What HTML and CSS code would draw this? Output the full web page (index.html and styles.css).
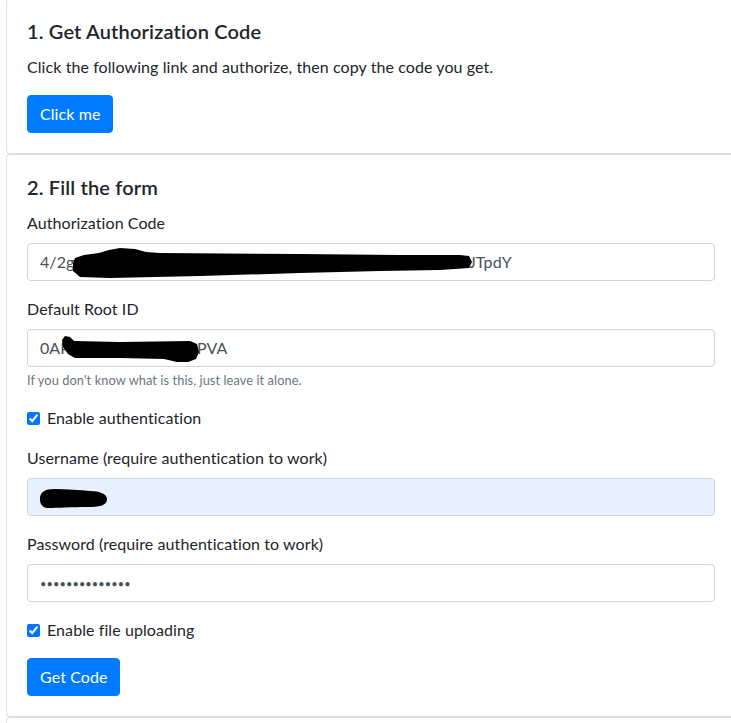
FILE: index.html
```html
<!DOCTYPE html>
<html lang="en">
<head>
<meta charset="utf-8">
<title>Setup</title>
<link rel="stylesheet" href="styles.css">
</head>
<body>
<div class="page">
  <section class="card">
    <div class="card-body">
      <h5 class="card-title">1. Get Authorization Code</h5>
      <p class="card-text">Click the following link and authorize, then copy the code you get.</p>
      <button class="btn" type="button">Click me</button>
    </div>
  </section>

  <section class="card">
    <div class="card-body">
      <h5 class="card-title">2. Fill the form</h5>
      <form class="form">
        <div class="form-group">
          <label class="form-label">Authorization Code</label>
          <div class="form-control field">
            <span class="code-head">4/2g</span><span>JTpdY</span>
            <svg class="scribble" viewBox="0 0 688 38" preserveAspectRatio="none" aria-hidden="true">
              <path d="M46 20 L48 15 L57 12 L72 10 L82 7 L93 5 L108 6 L119 9 L133 10 L273 11 L373 12 L433 12 L442 13 L445 19 L442 25 L413 27 L353 28 L273 30 L173 33 L83 35 L53 34 L46 28 Z" fill="#000"/>
            </svg>
          </div>
        </div>
        <div class="form-group">
          <label class="form-label">Default Root ID</label>
          <div class="form-control field">
            <span class="root-head">0AP</span><span>PVA</span>
            <svg class="scribble" viewBox="0 0 688 38" preserveAspectRatio="none" aria-hidden="true">
              <path d="M35 11 L38 7 L43 8 L47 12 L93 13 L163 12 L170 15 L172 23 L169 30 L161 33 L150 33 L137 30 L93 29 L48 29 L41 25 L36 18 Z" fill="#000"/>
            </svg>
          </div>
          <small class="form-text">If you don't know what is this, just leave it alone.</small>
        </div>
        <div class="form-group form-check">
          <input class="check" type="checkbox" checked>
          <label class="check-label">Enable authentication</label>
        </div>
        <div class="form-group">
          <label class="form-label">Username (require authentication to work)</label>
          <div class="form-control field autofill">
            <svg class="scribble" viewBox="0 0 688 38" preserveAspectRatio="none" aria-hidden="true">
              <path d="M13 21 C13 14 18 11 27 11 C40 11 52 12 63 13 C73 13 80 16 80 21 C80 28 72 29 60 29 C45 29 30 30 20 30 C15 29 13 26 13 21 Z" fill="#000"/>
            </svg>
          </div>
        </div>
        <div class="form-group">
          <label class="form-label">Password (require authentication to work)</label>
          <input class="form-control password" type="password" value="abcdefghijklmn">
        </div>
        <div class="form-group form-check">
          <input class="check" type="checkbox" checked>
          <label class="check-label">Enable file uploading</label>
        </div>
        <button class="btn" type="button">Get Code</button>
      </form>
    </div>
  </section>

  <section class="card card-next">
    <div class="card-body"></div>
  </section>
</div>
</body>
</html>
```
FILE: styles.css
```css
html, body {
  margin: 0;
  padding: 0;
  overflow: hidden;
  background: #fff;
}
body {
  font-family: "Lato", "Noto Sans", sans-serif;
  font-size: 16px;
  line-height: 1.5;
  letter-spacing: 0.08px;
  color: #212529;
}
.page {
  width: 730px;
  margin: -2px 0 0 6px;
}
.card {
  border: 1px solid rgba(0, 0, 0, 0.125);
  border-radius: 4px;
  background: #fff;
}
.card-body {
  padding: 20px;
}
.card-next .card-body {
  height: 120px;
}
.card-title {
  margin: 0 0 12px;
  font-size: 20px;
  line-height: 1.2;
  font-weight: 600;
  letter-spacing: 0.16px;
}
.card-text {
  margin: 0 0 16px;
}
.btn {
  display: inline-block;
  font-family: inherit;
  font-size: 16px;
  line-height: 1.5;
  letter-spacing: inherit;
  padding: 6px 12px;
  color: #fff;
  background: #007bff;
  border: 1px solid #007bff;
  border-radius: 4px;
}
.form {
  margin: 0;
}
.form-group {
  margin-bottom: 16px;
}
.form-label {
  display: block;
  margin-bottom: 8px;
}
.form-control {
  display: block;
  box-sizing: border-box;
  width: 100%;
  height: 38px;
  padding: 6px 12px;
  font-family: inherit;
  font-size: 16px;
  line-height: 1.5;
  color: #495057;
  background: #fff;
  border: 1px solid #ced4da;
  border-radius: 4px;
  margin: 0;
}
.field {
  position: relative;
  display: flex;
  align-items: center;
  white-space: nowrap;
}
.autofill {
  background: #e8f0fe;
}
.code-head {
  width: 429px;
  flex: none;
}
.root-head {
  width: 157px;
  flex: none;
}
.scribble {
  position: absolute;
  left: -1px;
  top: -1px;
  width: calc(100% + 2px);
  height: calc(100% + 2px);
  pointer-events: none;
}
.password {
  font-size: 11px;
  letter-spacing: 0.1px;
  color: #495057;
}
.form-text {
  display: block;
  margin-top: 4px;
  font-size: 12.8px;
  line-height: 1.5;
  color: #6c757d;
}
.form-check {
  display: flex;
  align-items: center;
  height: 24px;
}
.check {
  width: 13px;
  height: 13px;
  margin: 0 7px 0 0;
  accent-color: #0075ff;
}
.check-label {
  line-height: 1.5;
}
```
